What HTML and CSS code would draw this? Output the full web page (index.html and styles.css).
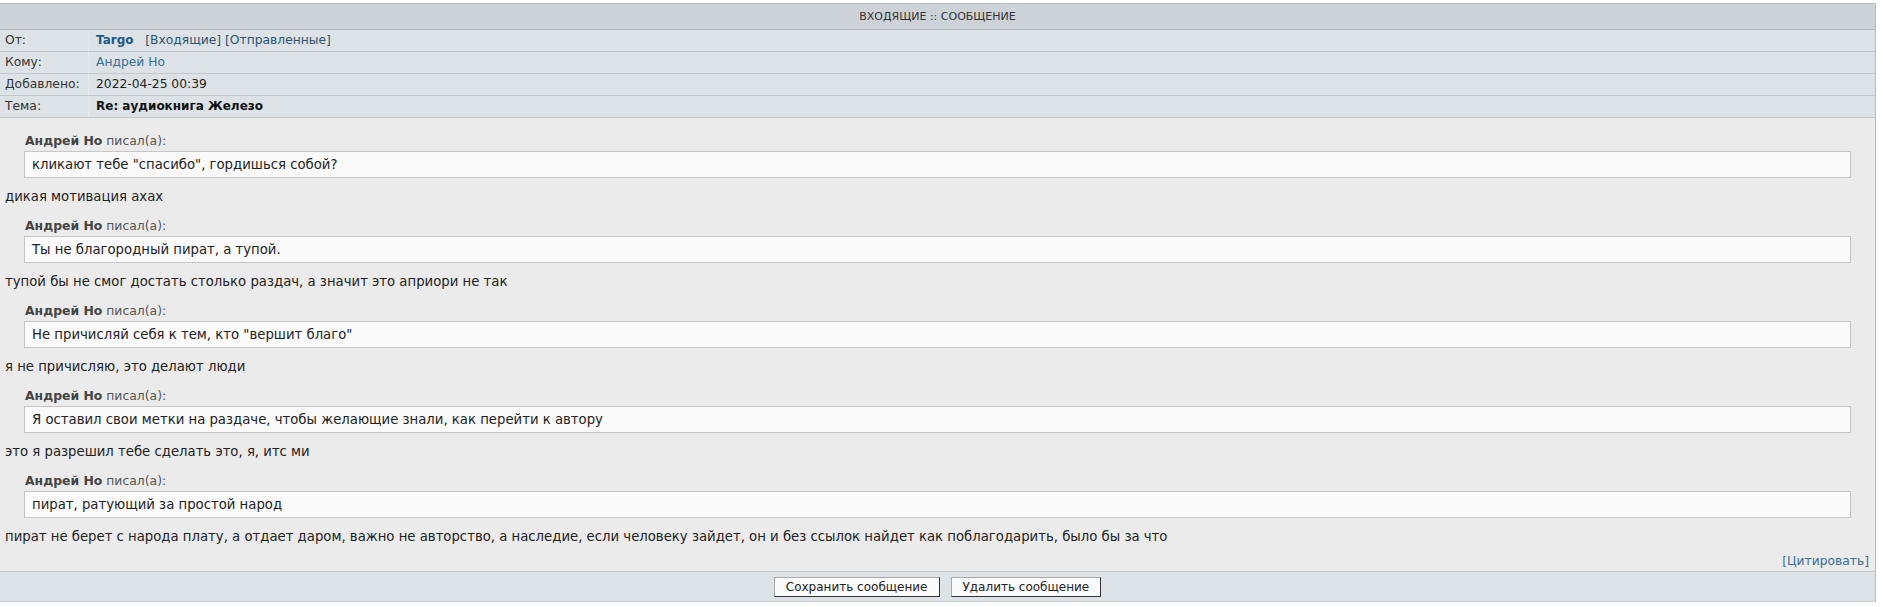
FILE: index.html
```html
<!DOCTYPE html>
<html lang="ru">
<head>
  <meta charset="UTF-8">
  <title>Входящие :: Сообщение</title>
  <link rel="stylesheet" href="styles.css">
</head>
<body>
  <div class="pm">
    <div class="pm-title">ВХОДЯЩИЕ :: СООБЩЕНИЕ</div>

    <div class="pm-row">
      <div class="pm-label">От:</div>
      <div class="pm-val"><a class="nick" href="#">Targo</a>&nbsp;&nbsp; <a class="folder" href="#">[Входящие]</a> <a class="folder" href="#">[Отправленные]</a></div>
    </div>
    <div class="pm-row">
      <div class="pm-label">Кому:</div>
      <div class="pm-val"><a class="user" href="#">Андрей Но</a></div>
    </div>
    <div class="pm-row">
      <div class="pm-label">Добавлено:</div>
      <div class="pm-val">2022-04-25 00:39</div>
    </div>
    <div class="pm-row">
      <div class="pm-label">Тема:</div>
      <div class="pm-val"><b>Re: аудиокнига Железо</b></div>
    </div>

    <div class="pm-body">
      <div class="quote">
        <div class="quote-head"><b>Андрей Но</b> писал(а):</div>
        <div class="quote-text">кликают тебе "спасибо", гордишься собой?</div>
      </div>
      <div class="reply">дикая мотивация ахах</div>

      <div class="quote">
        <div class="quote-head"><b>Андрей Но</b> писал(а):</div>
        <div class="quote-text">Ты не благородный пират, а тупой.</div>
      </div>
      <div class="reply">тупой бы не смог достать столько раздач, а значит это априори не так</div>

      <div class="quote">
        <div class="quote-head"><b>Андрей Но</b> писал(а):</div>
        <div class="quote-text">Не причисляй себя к тем, кто "вершит благо"</div>
      </div>
      <div class="reply">я не причисляю, это делают люди</div>

      <div class="quote">
        <div class="quote-head"><b>Андрей Но</b> писал(а):</div>
        <div class="quote-text">Я оставил свои метки на раздаче, чтобы желающие знали, как перейти к автору</div>
      </div>
      <div class="reply">это я разрешил тебе сделать это, я, итс ми</div>

      <div class="quote">
        <div class="quote-head"><b>Андрей Но</b> писал(а):</div>
        <div class="quote-text">пират, ратующий за простой народ</div>
      </div>
      <div class="reply last">пират не берет с народа плату, а отдает даром, важно не авторство, а наследие, если человеку зайдет, он и без ссылок найдет как поблагодарить, было бы за что</div>

      <div class="quote-link"><a href="#">[Цитировать]</a></div>
    </div>

    <div class="pm-actions">
      <button type="button">Сохранить сообщение</button>
      <button type="button">Удалить сообщение</button>
    </div>
  </div>
</body>
</html>
```

FILE: styles.css
```css
* {
  box-sizing: border-box;
}

body {
  margin: 0;
  padding-top: 3px;
  background: #fff;
  color: #222;
  font-family: "DejaVu Sans", Verdana, sans-serif;
}

a {
  text-decoration: none;
}

.pm {
  width: 1876px;
  border-right: 1px solid #b5babe;
}

.pm-title {
  height: 27px;
  line-height: 25px;
  background: #cdd2d6;
  border-top: 1px solid #b9bec2;
  border-bottom: 1px solid #b3b8bc;
  text-align: center;
  font-size: 11px;
  color: #333;
}

.pm-row {
  display: grid;
  grid-template-columns: 89px 1fr;
  height: 22px;
  line-height: 21px;
  background: #dde2e6;
  border-bottom: 1px solid #c3c8cc;
  font-size: 12.3px;
  color: #222;
}

.pm-label {
  padding-left: 5px;
  border-right: 1px solid #e6e9ec;
  color: #333;
}

.pm-val {
  padding-left: 7px;
}

.pm-val b {
  color: #111;
  font-size: 12px;
}

.nick {
  font-weight: bold;
  color: #1f5b85;
  font-size: 12px;
}

.folder {
  color: #2b5572;
}

.user {
  color: #3a6f96;
}

.pm-body {
  background: #ebebeb;
  padding: 15px 6px 2px 5px;
}

.quote {
  margin: 0 18px 0 19px;
}

.quote-head {
  font-size: 12.4px;
  line-height: 16px;
  padding-left: 1px;
  margin-bottom: 2px;
  color: #555;
}

.quote-head b {
  color: #444;
}

.quote-text {
  background: #fafafa;
  border: 1px solid #c6c6c6;
  padding: 5px 7px;
  font-size: 13.25px;
  line-height: 15px;
  color: #222;
}

.reply {
  font-size: 13.25px;
  line-height: 16px;
  margin: 11px 0 13px;
  color: #222;
}

.reply.last {
  margin-bottom: 8px;
}

.quote-link {
  text-align: right;
  font-size: 12.3px;
  line-height: 16px;
}

.quote-link a {
  color: #3a6f96;
}

.pm-actions {
  display: flex;
  justify-content: center;
  gap: 11px;
  padding: 5px 0 4px;
  background: #dde2e6;
  border-top: 1px solid #c4c9cd;
  border-bottom: 1px solid #c4c9cd;
}

.pm-actions button {
  height: 20px;
  padding: 0 11px;
  font-family: "DejaVu Sans", Verdana, sans-serif;
  font-size: 12px;
  color: #222;
  background: #fafafa;
  border: 1px solid;
  border-color: #a8a8a8 #333 #333 #a8a8a8;
  border-radius: 0;
}
```
